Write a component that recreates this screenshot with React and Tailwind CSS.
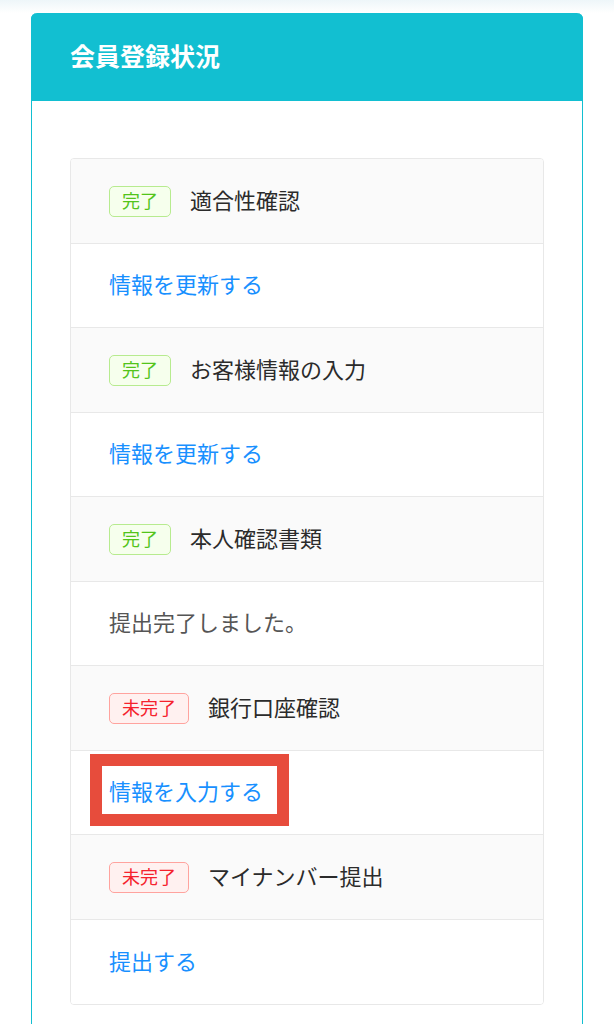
import React from "react";

const steps = [
  { done: true, title: "適合性確認", action: "情報を更新する", link: true },
  { done: true, title: "お客様情報の入力", action: "情報を更新する", link: true },
  { done: true, title: "本人確認書類", action: "提出完了しました。", link: false },
  { done: false, title: "銀行口座確認", action: "情報を入力する", link: true, marked: true },
  { done: false, title: "マイナンバー提出", action: "提出する", link: true },
];

function Tag({ done }) {
  return done ? (
    <span className="inline-flex items-center h-[31px] px-[12px] pb-[2px] rounded-[5px] border border-[#b7eb8f] bg-[#f6ffed] text-[#52c41a] text-[18px] leading-none">
      完了
    </span>
  ) : (
    <span className="inline-flex items-center h-[31px] px-[12px] pb-[2px] rounded-[5px] border border-[#ffa39e] bg-[#fff1f0] text-[#f5222d] text-[18px] leading-none">
      未完了
    </span>
  );
}

export default function App() {
  return (
    <div
      className="min-h-screen bg-white"
      style={{ fontFamily: '"Noto Sans CJK JP", "Noto Sans", sans-serif' }}
    >
      <div className="h-[13px] bg-gradient-to-b from-[#eef6f9] to-white" />
      <div className="mx-[31px] rounded-t-[6px] border-x border-[#12bfd1] pb-[60px]">
        <div className="h-[88px] -mx-px rounded-t-[6px] bg-[#12bfd1] flex items-center px-[39px]">
          <h2 className="text-white text-[25px] font-bold leading-none -mt-[4px]">会員登録状況</h2>
        </div>
        <div className="mx-[38px] mt-[57px] rounded-[4px] border border-[#e8e8e8] overflow-hidden">
          {steps.map((s, i) => (
            <div key={i}>
              <div className="flex items-center bg-[#fafafa] border-b border-[#e8e8e8] h-[85px] px-[38px]">
                <Tag done={s.done} />
                <span className="ml-[19px] -mt-[5px] text-[22px] leading-none text-[#2b2b2b]">{s.title}</span>
              </div>
              <div
                className={
                  "relative flex items-center bg-white h-[84px] px-[38px] " +
                  (i < steps.length - 1 ? "border-b border-[#e8e8e8]" : "")
                }
              >
                <span
                  className={
                    s.link
                      ? "-mt-[5px] text-[22px] leading-none text-[#1890ff]"
                      : "-mt-[5px] text-[22px] leading-none text-[#555]"
                  }
                >
                  {s.action}
                </span>
                {s.marked && (
                  <div className="absolute left-[19px] top-[3px] w-[199px] h-[72px] border-[12px] border-[#e74c3c]" />
                )}
              </div>
            </div>
          ))}
        </div>
      </div>
    </div>
  );
}
